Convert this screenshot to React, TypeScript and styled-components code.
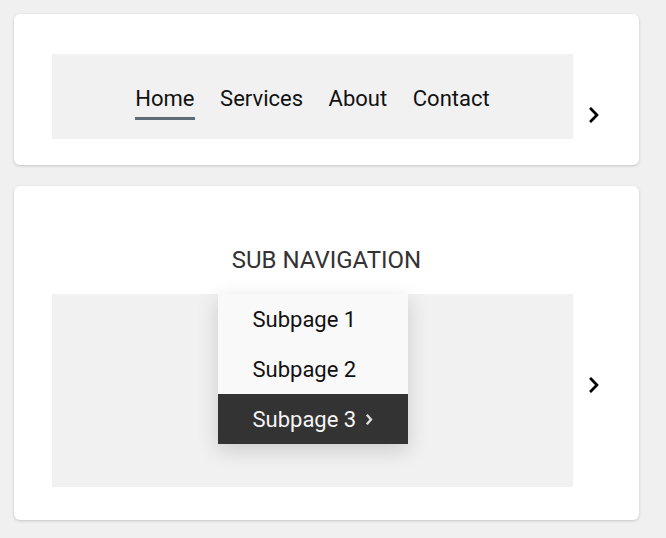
import React from "react";
import styled, { createGlobalStyle } from "styled-components";
import { FaChevronRight } from "react-icons/fa";

const GlobalStyle = createGlobalStyle`
  html, body {
    margin: 0;
    padding: 0;
    background: #f0f0f0;
    font-family: Roboto, "Liberation Sans", Arial, sans-serif;
  }
`;

const Page = styled.div`
  display: flex;
  flex-direction: column;
  gap: 21px;
  padding: 14px;
`;

const Card = styled.section<{ $padBottom: number }>`
  width: 625px;
  box-sizing: border-box;
  background: #ffffff;
  border-radius: 6px;
  box-shadow: 0 1px 3px rgba(0, 0, 0, 0.18);
  padding: 40px 38px ${(p) => p.$padBottom}px;
  display: flex;
  flex-direction: column;
`;

const Heading = styled.h2`
  margin: 20px 0 20px;
  text-align: center;
  font-size: 24px;
  font-weight: 400;
  color: #333333;
  line-height: normal;
`;

const Row = styled.div`
  display: flex;
  align-items: flex-start;
`;

const NavBar = styled.nav<{ $height: number }>`
  position: relative;
  flex: none;
  width: 521px;
  height: ${(p) => p.$height}px;
  box-sizing: border-box;
  background: #f1f1f1;
  display: flex;
  justify-content: center;
  align-items: flex-start;
  gap: 25.6px;
  padding-top: 32px;
`;

const NavLink = styled.a<{ $active?: boolean }>`
  font-size: 22px;
  line-height: normal;
  color: #111111;
  text-decoration: none;
  padding-bottom: 6px;
  border-bottom: 3px solid ${(p) => (p.$active ? "#5f6b75" : "transparent")};
`;

const ChevronButton = styled.button<{ $top: number }>`
  flex: none;
  width: 28px;
  margin-top: ${(p) => p.$top}px;
  padding: 0 0 0 14px;
  border: 0;
  background: transparent;
  color: #000000;
  display: flex;
  justify-content: flex-start;
  font-size: 18px;
`;

const Dropdown = styled.ul`
  position: absolute;
  top: 0;
  left: 50%;
  transform: translateX(-50%);
  width: 190px;
  margin: 0;
  padding: 0;
  list-style: none;
  background: #f9f9f9;
  box-shadow: 0 6px 20px rgba(0, 0, 0, 0.16);
`;

const DropItem = styled.li<{ $active?: boolean }>`
  height: 50px;
  display: flex;
  align-items: center;
  gap: 9px;
  padding-left: 35px;
  font-size: 22px;
  color: ${(p) => (p.$active ? "#f5f5f5" : "#111111")};
  background: ${(p) => (p.$active ? "#333333" : "transparent")};
`;

const SmallChevron = () => (
  <svg width="8" height="13" viewBox="0 0 8 13" aria-hidden="true">
    <polyline points="1.8,1.8 6,6.5 1.8,11.2" fill="none" stroke="#dddddd" strokeWidth="2.4" />
  </svg>
);

export default function App() {
  return (
    <>
      <GlobalStyle />
      <Page>
        <Card $padBottom={26}>
          <Row>
            <NavBar $height={85}>
              <NavLink $active>Home</NavLink>
              <NavLink>Services</NavLink>
              <NavLink>About</NavLink>
              <NavLink>Contact</NavLink>
            </NavBar>
            <ChevronButton $top={52}>
              <FaChevronRight />
            </ChevronButton>
          </Row>
        </Card>
        <Card $padBottom={33}>
          <Heading>SUB NAVIGATION</Heading>
          <Row>
            <NavBar $height={193}>
              <Dropdown>
                <DropItem>Subpage 1</DropItem>
                <DropItem>Subpage 2</DropItem>
                <DropItem $active>
                  Subpage 3 <SmallChevron />
                </DropItem>
              </Dropdown>
            </NavBar>
            <ChevronButton $top={82}>
              <FaChevronRight />
            </ChevronButton>
          </Row>
        </Card>
      </Page>
    </>
  );
}
